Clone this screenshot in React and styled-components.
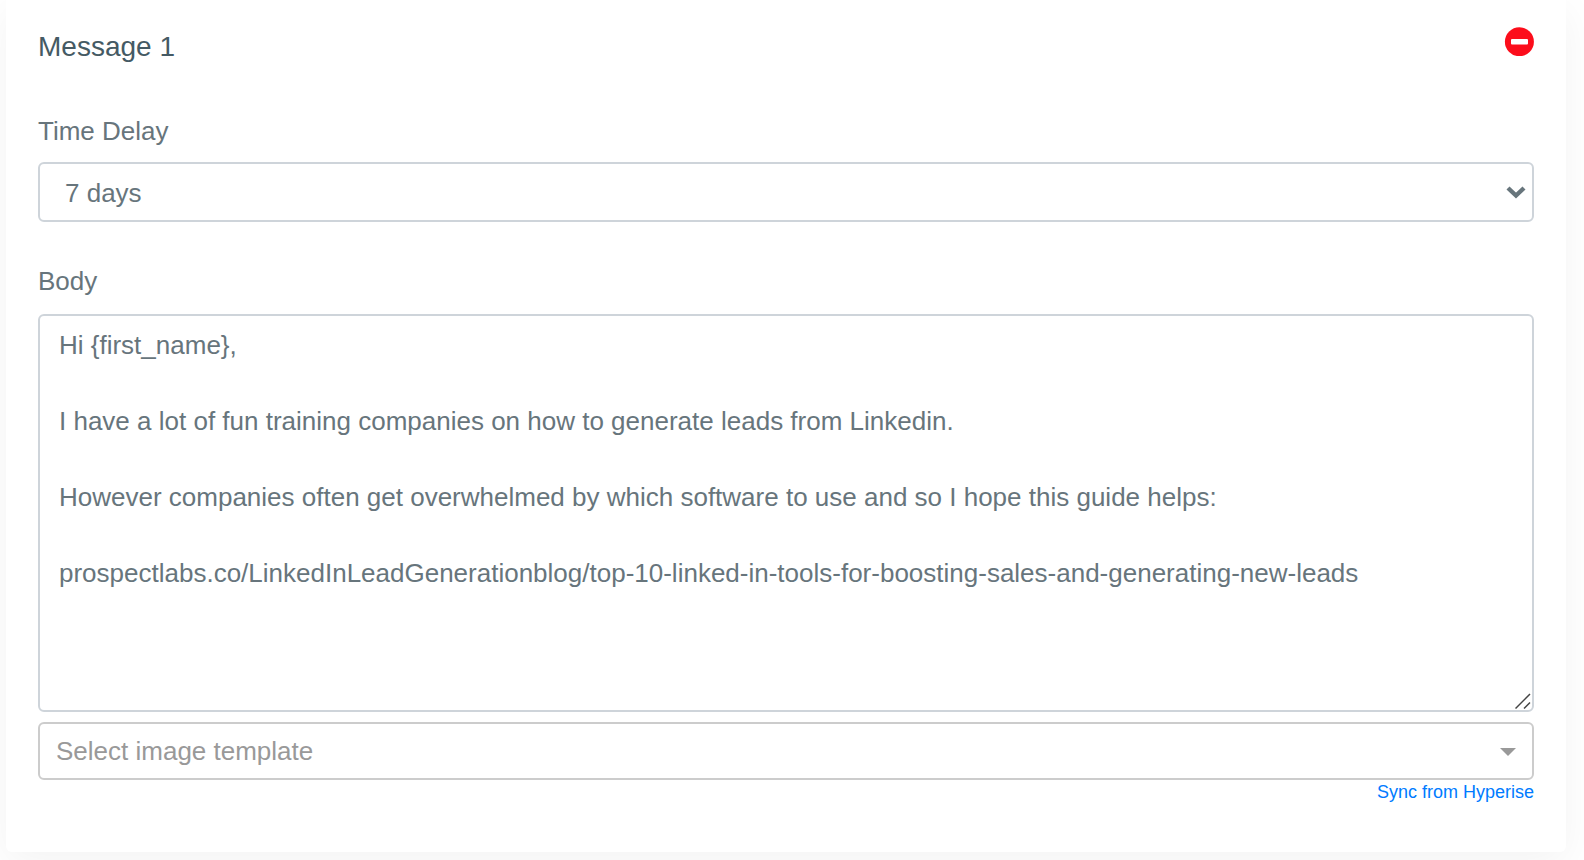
import React, { useState } from "react";
import styled, { createGlobalStyle } from "styled-components";

const GlobalStyle = createGlobalStyle`
  *,
  *::before,
  *::after {
    box-sizing: border-box;
  }
  body {
    margin: 0;
    background-color: #fff;
    color: #67757c;
    font-family: "Liberation Sans", Arial, sans-serif;
    font-size: 26px;
    line-height: 38px;
  }
`;

const Page = styled.main`
  padding: 0 18px 8px 6px;
  overflow: hidden;
`;

const Card = styled.section`
  padding: 26px 32px 48px;
  border-radius: 0 0 6px 6px;
  background-color: #fff;
  box-shadow: 0 10px 40px rgb(0 0 0 / 5%);
`;

const CardHeader = styled.header`
  display: flex;
  justify-content: space-between;
  align-items: flex-start;
  margin-bottom: 44px;
`;

const Title = styled.h4`
  margin: 0;
  color: #455a64;
  font-size: 28px;
  font-weight: 400;
  line-height: 42px;
`;

const RemoveButton = styled.button`
  display: flex;
  padding: 0;
  border: 0;
  background: none;
  cursor: pointer;
`;

const FormGroup = styled.div`
  margin-bottom: ${(props) => props.$gap || 0}px;
`;

const Label = styled.label`
  display: block;
  margin-bottom: ${(props) => props.$gap}px;
`;

const Field = styled.div`
  position: relative;
  display: flex;
`;

const FieldMark = styled.svg`
  position: absolute;
  right: ${(props) => props.$right}px;
  bottom: ${(props) => props.$bottom}px;
  pointer-events: none;
`;

const Select = styled.select`
  width: 100%;
  height: 60px;
  padding: 2px 48px 0 25px;
  border: 2px solid #ced4da;
  border-radius: 6px;
  appearance: none;
  background-color: #fff;
  color: inherit;
  font: inherit;
`;

const TemplateSelect = styled(Select)`
  height: 58px;
  padding: 0 48px 0 16px;
  border-color: #ccc;
  color: #999;
`;

const TextArea = styled.textarea`
  width: 100%;
  height: 398px;
  padding: 10px 19px;
  border: 2px solid #ced4da;
  border-radius: 6px;
  background-color: #fff;
  color: inherit;
  font: inherit;
  resize: vertical;
  &::-webkit-resizer {
    background: transparent;
  }
`;

const SyncRow = styled.div`
  display: flex;
  justify-content: flex-end;
`;

const SyncLink = styled.a`
  color: #007bff;
  font-size: 18px;
  line-height: 24px;
  text-decoration: none;
  &:hover {
    text-decoration: underline;
  }
`;

const defaultBody = `Hi {first_name},

I have a lot of fun training companies on how to generate leads from Linkedin.

However companies often get overwhelmed by which software to use and so I hope this guide helps:

prospectlabs.co/LinkedInLeadGenerationblog/top-10-linked-in-tools-for-boosting-sales-and-generating-new-leads`;

export default function App() {
  const [delay, setDelay] = useState("7");
  const [body, setBody] = useState(defaultBody);
  const [template, setTemplate] = useState("");

  return (
    <>
      <GlobalStyle />
      <Page>
        <Card>
          <CardHeader>
            <Title>Message 1</Title>
            <RemoveButton type="button" aria-label="Remove message">
              <svg width="30" height="30" viewBox="0 0 30 30">
                <circle cx="15.4" cy="15.7" r="14.5" fill="#fc0d1b" />
                <rect x="7" y="13" width="17" height="5.4" rx="1" fill="#fff" />
              </svg>
            </RemoveButton>
          </CardHeader>

          <FormGroup $gap={40}>
            <Label htmlFor="delay" $gap={12}>
              Time Delay
            </Label>
            <Field>
              <Select
                id="delay"
                value={delay}
                onChange={(e) => setDelay(e.target.value)}
              >
                <option value="7">7 days</option>
              </Select>
              <FieldMark $right={8} $bottom={22} width="20" height="14">
                <path
                  d="M2 2 L10 9.5 L18 2"
                  fill="none"
                  stroke="#67757c"
                  strokeWidth="4.4"
                />
              </FieldMark>
            </Field>
          </FormGroup>

          <FormGroup $gap={10}>
            <Label htmlFor="body" $gap={14}>
              Body
            </Label>
            <Field>
              <TextArea
                id="body"
                spellCheck={false}
                value={body}
                onChange={(e) => setBody(e.target.value)}
              />
              <FieldMark $right={3} $bottom={3} width="16" height="16">
                <path
                  d="M0.5 15.5 L15 1 M9 15.5 L15 9.5"
                  fill="none"
                  stroke="#444"
                  strokeWidth="1.5"
                />
              </FieldMark>
            </Field>
          </FormGroup>

          <FormGroup>
            <Field>
              <TemplateSelect
                aria-label="Image template"
                value={template}
                onChange={(e) => setTemplate(e.target.value)}
              >
                <option value="">Select image template</option>
              </TemplateSelect>
              <FieldMark $right={18} $bottom={24} width="16" height="8">
                <path d="M0 0 H16 L8 8 Z" fill="#999" />
              </FieldMark>
            </Field>
            <SyncRow>
              <SyncLink href="#sync">Sync from Hyperise</SyncLink>
            </SyncRow>
          </FormGroup>
        </Card>
      </Page>
    </>
  );
}
